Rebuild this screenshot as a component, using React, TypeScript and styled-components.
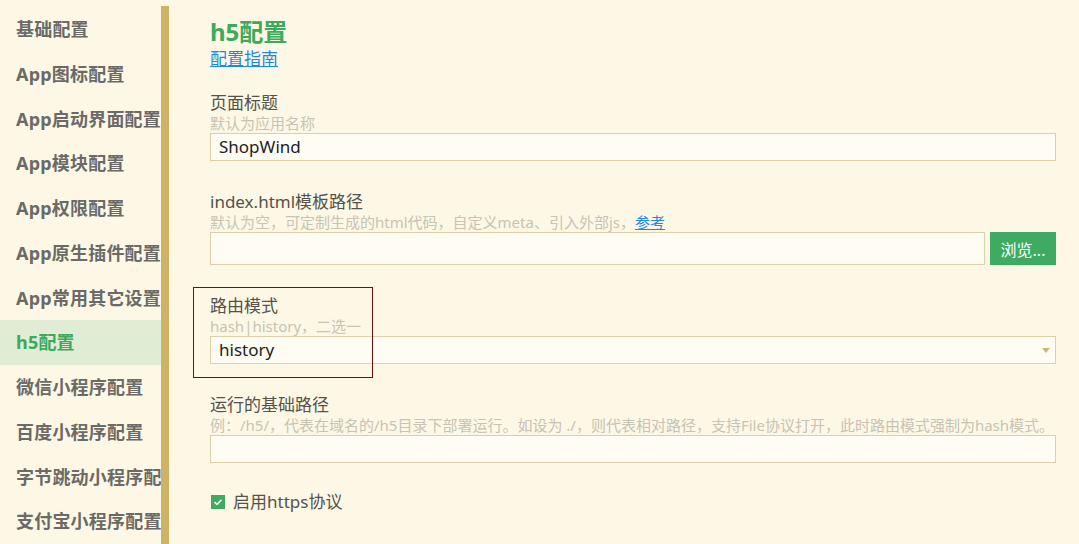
import React from "react";
import styled, { createGlobalStyle } from "styled-components";

const Global = createGlobalStyle`
  html, body { margin: 0; padding: 0; background: #fdf8e6; }
  body { font-family: "Noto Sans", "Noto Sans CJK SC", sans-serif; }
  * { box-sizing: border-box; }
`;

const Page = styled.div`
  display: flex;
  width: 1079px;
  height: 544px;
  overflow: hidden;
  background: #fdf8e6;
  position: relative;
`;

const Sidebar = styled.nav`
  width: 169px;
  flex: none;
  display: flex;
  flex-direction: column;
  border-right: 8px solid #ceb265;
  margin-top: 6px;
  padding-top: 1px;
`;

const NavItem = styled.div<{ $active?: boolean }>`
  height: 45px;
  line-height: 45px;
  padding-left: 16px;
  white-space: nowrap;
  overflow: hidden;
  font-size: 18px;
  font-weight: 700;
  letter-spacing: 0.2px;
  color: ${(p) => (p.$active ? "#3ca95c" : "#6b6a66")};
  background: ${(p) => (p.$active ? "#e0ecd3" : "transparent")};
`;

const Main = styled.main`
  flex: 1;
  padding: 16px 23px 0 41px;
  display: flex;
  flex-direction: column;
`;

const Title = styled.h1`
  margin: 0;
  font-size: 24px;
  line-height: 31px;
  font-weight: 700;
  color: #3ca95c;
`;

const Guide = styled.a`
  margin-top: 1px;
  font-size: 17px;
  line-height: 22px;
  color: #1e88e5;
  text-decoration: underline;
  align-self: flex-start;
  cursor: pointer;
`;

const Field = styled.div<{ $top: number }>`
  margin-top: ${(p) => p.$top}px;
  display: flex;
  flex-direction: column;
`;

const Label = styled.div`
  font-size: 17px;
  line-height: 21px;
  color: #55524a;
`;

const Hint = styled.div`
  font-size: 15px;
  line-height: 20px;
  color: #c8c3b3;
  white-space: nowrap;
`;

const HintLink = styled.a`
  color: #1e88e5;
  text-decoration: underline;
`;

const Input = styled.div<{ $h?: number }>`
  height: ${(p) => p.$h ?? 28}px;
  flex: none;
  border: 1px solid #ddd0a6;
  background: #fffcf3;
  font-size: 17px;
  line-height: ${(p) => (p.$h ?? 28) - 2}px;
  padding: 0 8px;
  color: #222;
  position: relative;
`;

const Row = styled.div`
  display: flex;
  gap: 5px;
  & > ${Input} {
    flex: 1;
  }
`;

const Button = styled.button`
  height: 33px;
  width: 66px;
  border: none;
  background: #3eaa62;
  color: #fff;
  font-size: 16px;
  font-family: "Noto Sans", "Noto Sans CJK SC", sans-serif;
  padding: 0;
`;

const Arrow = styled.span`
  position: absolute;
  right: 5px;
  top: 11px;
  width: 0;
  height: 0;
  border-left: 4px solid transparent;
  border-right: 4px solid transparent;
  border-top: 5px solid #c9b77e;
`;

const CheckRow = styled.label`
  margin-top: 29px;
  display: flex;
  align-items: center;
  gap: 8px;
  font-size: 17px;
  color: #55524a;
  line-height: 20px;
`;

const Box = styled.span`
  width: 14px;
  height: 14px;
  background: #3eaa62;
  display: inline-flex;
  align-items: center;
  justify-content: center;
  margin-left: 1px;
`;

const Marker = styled.div`
  position: absolute;
  left: 193px;
  top: 287px;
  width: 180px;
  height: 91px;
  border: 1px solid #6b1010;
  pointer-events: none;
`;

const items = [
  "基础配置",
  "App图标配置",
  "App启动界面配置",
  "App模块配置",
  "App权限配置",
  "App原生插件配置",
  "App常用其它设置",
  "h5配置",
  "微信小程序配置",
  "百度小程序配置",
  "字节跳动小程序配置",
  "支付宝小程序配置",
];

export default function App() {
  return (
    <Page>
      <Global />
      <Sidebar>
        {items.map((t) => (
          <NavItem key={t} $active={t === "h5配置"}>
            {t}
          </NavItem>
        ))}
      </Sidebar>
      <Main>
        <Title>h5配置</Title>
        <Guide>配置指南</Guide>
        <Field $top={22}>
          <Label>页面标题</Label>
          <Hint>默认为应用名称</Hint>
          <Input>ShopWind</Input>
        </Field>
        <Field $top={30}>
          <Label>index.html模板路径</Label>
          <Hint>
            默认为空，可定制生成的html代码，自定义meta、引入外部js，<HintLink>参考</HintLink>
          </Hint>
          <Row>
            <Input $h={33} />
            <Button>浏览...</Button>
          </Row>
        </Field>
        <Field $top={30}>
          <Label>路由模式</Label>
          <Hint>hash|history，二选一</Hint>
          <Input>
            history
            <Arrow />
          </Input>
        </Field>
        <Field $top={30}>
          <Label>运行的基础路径</Label>
          <Hint>
            例：/h5/，代表在域名的/h5目录下部署运行。如设为 ./，则代表相对路径，支持File协议打开，此时路由模式强制为hash模式。
          </Hint>
          <Input />
        </Field>
        <CheckRow>
          <Box>
            <svg width="10" height="8" viewBox="0 0 10 8">
              <path d="M1.5 4 L4 6.3 L8.5 1.7" stroke="#fff" strokeWidth="1.6" fill="none" />
            </svg>
          </Box>
          启用https协议
        </CheckRow>
      </Main>
      <Marker />
    </Page>
  );
}
